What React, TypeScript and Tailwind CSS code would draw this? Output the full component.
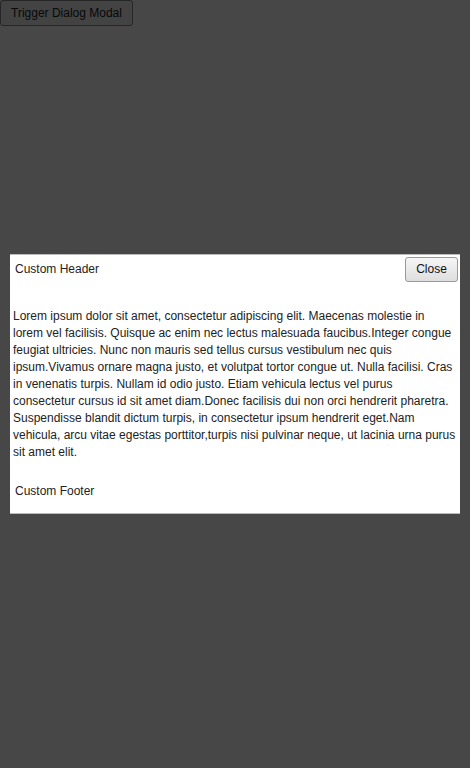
export default function App() {
    const body =
        "Lorem ipsum dolor sit amet, consectetur adipiscing elit. Maecenas molestie in lorem vel facilisis. Quisque ac enim nec lectus malesuada faucibus.Integer congue feugiat ultricies. Nunc non mauris sed tellus cursus vestibulum nec quis ipsum.Vivamus ornare magna justo, et volutpat tortor congue ut. Nulla facilisi. Cras in venenatis turpis. Nullam id odio justo. Etiam vehicula lectus vel purus consectetur cursus id sit amet diam.Donec facilisis dui non orci hendrerit pharetra. Suspendisse blandit dictum turpis, in consectetur ipsum hendrerit eget.Nam vehicula, arcu vitae egestas porttitor,turpis nisi pulvinar neque, ut lacinia urna purus sit amet elit.";

    return (
        <div className="min-h-screen bg-white font-['Liberation_Sans',Arial,sans-serif] text-[12px] text-[#333]">
            {/* trigger */}
            <button className="h-[26px] px-[10px] rounded-[3px] border border-[#8a8a8a] bg-[#efefef] text-[12px] text-[#222]">
                Trigger Dialog Modal
            </button>

            {/* overlay */}
            <div className="fixed inset-0 flex items-center justify-center bg-black/[0.72]">
                <div className="w-[450px] h-[260px] flex flex-col bg-white border-y border-[#bbb] leading-[17px]">
                    <div className="flex items-center justify-between pl-[5px] pr-[2px] pt-[2px]">
                        <span className="text-[#222]">Custom Header</span>
                        <button className="h-[25px] w-[53px] rounded-[3px] border border-[#999] bg-gradient-to-b from-[#f6f6f6] to-[#dedede] text-[12px] text-[#111]">
                            Close
                        </button>
                    </div>
                    <p className="px-[3px] pt-[26px] text-[#222]">{body}</p>
                    <div className="pl-[5px] pt-[22px] text-[#222]">Custom Footer</div>
                </div>
            </div>
        </div>
    );
}
